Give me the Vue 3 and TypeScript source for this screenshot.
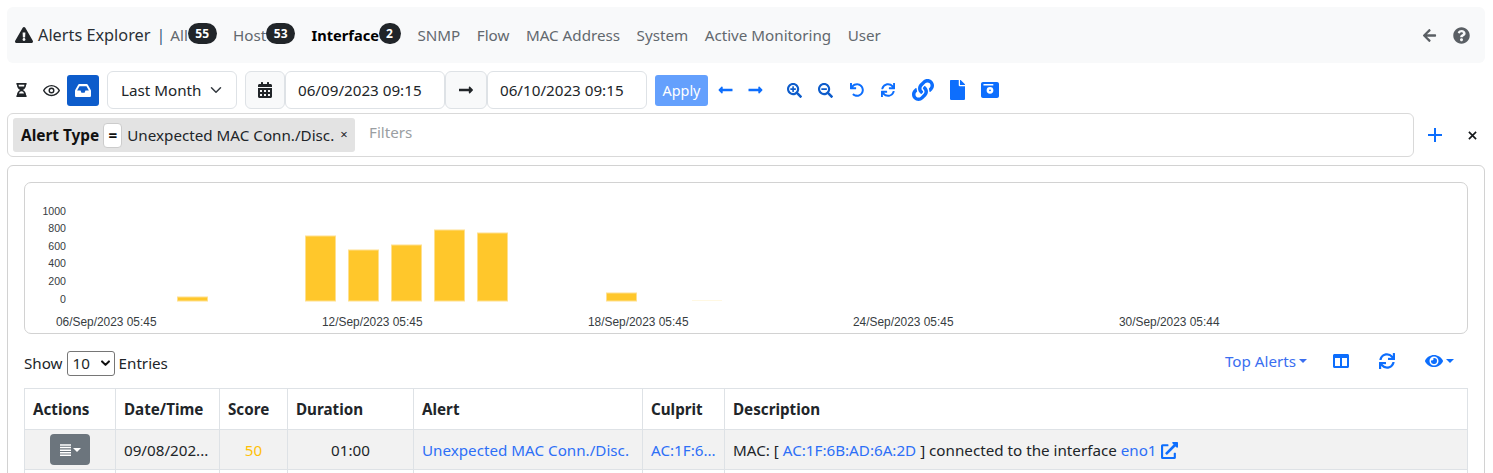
<script setup lang="ts">
const p = {
  warn: 'M569.517 440.013C587.975 472.007 564.806 512 527.94 512H48.054c-36.937 0-59.999-40.055-41.577-71.987L246.423 24.035c18.467-32.009 64.72-31.951 83.154 0l239.94 416.178zM288 354c-25.405 0-46 20.595-46 46s20.595 46 46 46 46-20.595 46-46-20.595-46-46-46zm-43.673-165.346l7.418 136c.347 6.364 5.609 11.346 11.982 11.346h48.546c6.373 0 11.635-4.982 11.982-11.346l7.418-136c.375-6.874-5.098-12.654-11.982-12.654h-63.383c-6.884 0-12.356 5.78-11.981 12.654z',
  hourglass: 'M360 0H24C10.745 0 0 10.745 0 24v16c0 13.255 10.745 24 24 24 0 90.965 51.016 167.734 120.842 192C75.016 280.266 24 357.035 24 448c-13.255 0-24 10.745-24 24v16c0 13.255 10.745 24 24 24h336c13.255 0 24-10.745 24-24v-16c0-13.255-10.745-24-24-24 0-90.965-51.016-167.734-120.842-192C308.984 231.734 360 154.965 360 64c13.255 0 24-10.745 24-24V24c0-13.255-10.745-24-24-24zm-75.078 384H99.08c17.059-46.797 52.096-80 92.92-80 40.821 0 75.862 33.196 92.922 80zm.019-256H99.078C91.988 108.548 88 86.748 88 64h208c0 22.805-3.987 44.587-11.059 64z',
  eyeR: 'M572.52 241.4C518.29 135.59 410.93 64 288 64S57.68 135.64 3.48 241.41a32.35 32.35 0 0 0 0 29.19C57.71 376.41 165.07 448 288 448s230.32-71.64 284.52-177.41a32.35 32.35 0 0 0 0-29.19zM288 400c-98.65 0-189.09-55-237.93-144C98.91 167 189.34 112 288 112s189.09 55 237.93 144C477.1 345 386.66 400 288 400z',
  inbox: 'M567.938 243.908L462.25 85.374A48.003 48.003 0 0 0 422.311 64H153.689a48 48 0 0 0-39.938 21.374L8.062 243.908A47.994 47.994 0 0 0 0 270.533V400c0 26.51 21.49 48 48 48h480c26.51 0 48-21.49 48-48V270.533a47.994 47.994 0 0 0-8.062-26.625zM162.252 128h251.497l85.333 128H376l-32 64H232l-32-64H76.918l85.334-128z',
  cal: 'M0 464c0 26.5 21.5 48 48 48h352c26.5 0 48-21.5 48-48V192H0v272zm320-196c0-6.6 5.4-12 12-12h40c6.6 0 12 5.4 12 12v40c0 6.6-5.4 12-12 12h-40c-6.6 0-12-5.4-12-12v-40zm0 128c0-6.6 5.4-12 12-12h40c6.6 0 12 5.4 12 12v40c0 6.6-5.4 12-12 12h-40c-6.6 0-12-5.4-12-12v-40zM192 268c0-6.6 5.4-12 12-12h40c6.6 0 12 5.4 12 12v40c0 6.6-5.4 12-12 12h-40c-6.6 0-12-5.4-12-12v-40zm0 128c0-6.6 5.4-12 12-12h40c6.6 0 12 5.4 12 12v40c0 6.6-5.4 12-12 12h-40c-6.6 0-12-5.4-12-12v-40zM64 268c0-6.6 5.4-12 12-12h40c6.6 0 12 5.4 12 12v40c0 6.6-5.4 12-12 12H76c-6.6 0-12-5.4-12-12v-40zm0 128c0-6.6 5.4-12 12-12h40c6.6 0 12 5.4 12 12v40c0 6.6-5.4 12-12 12H76c-6.6 0-12-5.4-12-12v-40zM400 64h-48V16c0-8.8-7.2-16-16-16h-32c-8.8 0-16 7.2-16 16v48H160V16c0-8.8-7.2-16-16-16h-32c-8.8 0-16 7.2-16 16v48H48C21.5 64 0 85.5 0 112v48h448v-48c0-26.5-21.5-48-48-48z',
  right: 'M313.941 216H12c-6.627 0-12 5.373-12 12v56c0 6.627 5.373 12 12 12h301.941v46.059c0 21.382 25.851 32.09 40.971 16.971l86.059-86.059c9.373-9.373 9.373-24.569 0-33.941l-86.059-86.059c-15.119-15.119-40.971-4.411-40.971 16.971V216z',
  left: 'M134.059 296H436c6.627 0 12-5.373 12-12v-56c0-6.627-5.373-12-12-12H134.059v-46.059c0-21.382-25.851-32.09-40.971-16.971L7.029 239.029c-9.373 9.373-9.373 24.569 0 33.941l86.059 86.059c15.119 15.119 40.971 4.411 40.971-16.971V296z',
  zoomIn: 'M304 192v32c0 6.6-5.4 12-12 12h-56v56c0 6.6-5.4 12-12 12h-32c-6.6 0-12-5.4-12-12v-56h-56c-6.6 0-12-5.4-12-12v-32c0-6.6 5.4-12 12-12h56v-56c0-6.6 5.4-12 12-12h32c6.6 0 12 5.4 12 12v56h56c6.6 0 12 5.4 12 12zm201 284.7L476.7 505c-9.4 9.4-24.6 9.4-33.9 0L343 405.3c-4.5-4.5-7-10.6-7-17V372c-35.3 27.6-79.7 44-128 44C93.1 416 0 322.9 0 208S93.1 0 208 0s208 93.1 208 208c0 48.3-16.4 92.7-44 128h16.3c6.4 0 12.5 2.5 17 7l99.7 99.7c9.3 9.4 9.3 24.6 0 34zM344 208c0-75.2-60.8-136-136-136S72 132.8 72 208s60.8 136 136 136 136-60.8 136-136z',
  zoomOut: 'M304 192v32c0 6.6-5.4 12-12 12H124c-6.6 0-12-5.4-12-12v-32c0-6.6 5.4-12 12-12h168c6.6 0 12 5.4 12 12zm201 284.7L476.7 505c-9.4 9.4-24.6 9.4-33.9 0L343 405.3c-4.5-4.5-7-10.6-7-17V372c-35.3 27.6-79.7 44-128 44C93.1 416 0 322.9 0 208S93.1 0 208 0s208 93.1 208 208c0 48.3-16.4 92.7-44 128h16.3c6.4 0 12.5 2.5 17 7l99.7 99.7c9.3 9.4 9.3 24.6 0 34zM344 208c0-75.2-60.8-136-136-136S72 132.8 72 208s60.8 136 136 136 136-60.8 136-136z',
  undo: 'M212.333 224.333H12c-6.627 0-12-5.373-12-12V12C0 5.373 5.373 0 12 0h48c6.627 0 12 5.373 12 12v78.112C117.773 39.279 184.26 7.47 258.175 8.007c136.906.994 246.448 111.623 246.157 248.532C504.041 393.258 393.12 504 256.333 504c-64.089 0-122.496-24.313-166.51-64.215-5.099-4.622-5.334-12.554-.467-17.42l33.967-33.967c4.474-4.474 11.662-4.717 16.401-.525C170.76 415.336 211.58 432 256.333 432c97.268 0 176-78.716 176-176 0-97.267-78.716-176-176-176-58.496 0-110.28 28.476-142.274 72.333h98.274c6.627 0 12 5.373 12 12v48c0 6.627-5.373 12-12 12z',
  sync: 'M440.65 12.57l4 82.77A247.16 247.16 0 0 0 255.83 8C134.73 8 33.91 94.92 12.29 209.82A12 12 0 0 0 24.09 224h49.05a12 12 0 0 0 11.67-9.26 175.91 175.91 0 0 1 317-56.94l-101.46-4.86a12 12 0 0 0-12.57 12v47.41a12 12 0 0 0 12 12H500a12 12 0 0 0 12-12V12a12 12 0 0 0-12-12h-47.37a12 12 0 0 0-11.98 12.57zM255.83 432a175.61 175.61 0 0 1-146-77.8l101.8 4.87a12 12 0 0 0 12.57-12v-47.4a12 12 0 0 0-12-12H12a12 12 0 0 0-12 12V500a12 12 0 0 0 12 12h47.35a12 12 0 0 0 12-12.6l-4.15-82.57A247.17 247.17 0 0 0 255.83 504c121.11 0 221.93-86.92 243.55-201.82a12 12 0 0 0-11.8-14.18h-49.05a12 12 0 0 0-11.67 9.26A175.86 175.86 0 0 1 255.83 432z',
  link: 'M326.612 185.391c59.747 59.809 58.927 155.698.36 214.59-.11.12-.24.25-.36.37l-67.2 67.2c-59.27 59.27-155.699 59.262-214.96 0-59.27-59.26-59.27-155.7 0-214.96l37.106-37.106c9.84-9.84 26.786-3.3 27.294 10.606.648 17.722 3.826 35.527 9.69 52.721 1.986 5.822.567 12.262-3.783 16.612l-13.087 13.087c-28.026 28.026-28.905 73.66-1.155 101.96 28.024 28.579 74.086 28.749 102.325.51l67.2-67.19c28.191-28.191 28.073-73.757 0-101.83-3.701-3.694-7.429-6.564-10.341-8.569a16.037 16.037 0 0 1-6.947-12.606c-.396-10.567 3.348-21.456 11.698-29.806l21.054-21.055c5.521-5.521 14.182-6.199 20.584-1.731a152.482 152.482 0 0 1 20.522 17.197zM467.547 44.449c-59.261-59.262-155.69-59.27-214.96 0l-67.2 67.2c-.12.12-.25.25-.36.37-58.566 58.892-59.387 154.781.36 214.59a152.454 152.454 0 0 0 20.521 17.196c6.402 4.468 15.064 3.789 20.584-1.731l21.054-21.055c8.35-8.35 12.094-19.239 11.698-29.806a16.037 16.037 0 0 0-6.947-12.606c-2.912-2.005-6.64-4.875-10.341-8.569-28.073-28.073-28.191-73.639 0-101.83l67.2-67.19c28.239-28.239 74.3-28.069 102.325.51 27.75 28.3 26.872 73.934-1.155 101.96l-13.087 13.087c-4.35 4.35-5.769 10.79-3.783 16.612 5.864 17.194 9.042 34.999 9.69 52.721.509 13.906 17.454 20.446 27.294 10.606l37.106-37.106c59.271-59.259 59.271-155.699.001-214.959z',
  file: 'M224 136V0H24C10.7 0 0 10.7 0 24v464c0 13.3 10.7 24 24 24h336c13.3 0 24-10.7 24-24V160H248c-13.2 0-24-10.8-24-24zm160-14.1v6.1H256V0h6.1c6.4 0 12.5 2.5 17 7l97.9 98c4.5 4.5 7 10.6 7 16.9z',
  save: 'M56 0h400c30 0 56 26 56 56v343c0 30-26 56-56 56H56c-30 0-56-26-56-56V56C0 26 26 0 56 0zM70 56v40h280V56H70zM256 140a96 96 0 1 0 0 192 96 96 0 1 0 0-192zm0 70a26 26 0 1 1 0 52 26 26 0 1 1 0-52z',
  columns: 'M464 32H48C21.49 32 0 53.49 0 80v352c0 26.51 21.49 48 48 48h416c26.51 0 48-21.49 48-48V80c0-26.51-21.49-48-48-48zM224 416H64V160h160v256zm224 0H288V160h160v256z',
  eye: 'M572.52 241.4C518.29 135.59 410.93 64 288 64S57.68 135.64 3.48 241.41a32.35 32.35 0 0 0 0 29.19C57.71 376.41 165.07 448 288 448s230.32-71.64 284.52-177.41a32.35 32.35 0 0 0 0-29.19zM288 400a144 144 0 1 1 144-144 143.93 143.93 0 0 1-144 144zm0-240a95.31 95.31 0 0 0-25.31 3.79 47.85 47.85 0 0 1-66.9 66.9A95.78 95.78 0 1 0 288 160z',
  help: 'M504 256c0 136.997-111.043 248-248 248S8 392.997 8 256C8 119.083 119.043 8 256 8s248 111.083 248 248zM262.655 90c-54.497 0-89.255 22.957-116.549 63.758-3.536 5.286-2.353 12.415 2.715 16.258l34.699 26.31c5.205 3.947 12.621 3.008 16.665-2.122 17.864-22.658 30.113-35.797 57.303-35.797 20.429 0 45.698 13.148 45.698 32.958 0 14.976-12.363 22.667-32.534 33.976C247.128 238.528 216 254.941 216 296v4c0 6.627 5.373 12 12 12h56c6.627 0 12-5.373 12-12v-1.333c0-28.462 83.186-29.647 83.186-106.667 0-58.002-60.165-102-116.531-102zM256 338c-25.365 0-46 20.635-46 46 0 25.364 20.635 46 46 46s46-20.636 46-46c0-25.365-20.635-46-46-46z',
  back: 'M257.5 445.1l-22.2 22.2c-9.4 9.4-24.6 9.4-33.9 0L7 273c-9.4-9.4-9.4-24.6 0-33.9L201.4 44.7c9.4-9.4 24.6-9.4 33.9 0l22.2 22.2c9.5 9.5 9.3 25-.4 34.3L136.6 216H424c13.3 0 24 10.7 24 24v32c0 13.3-10.7 24-24 24H136.6l120.5 114.8c9.8 9.3 10 24.8.4 34.3z',
  ext: 'M432,320H400a16,16,0,0,0-16,16V448H64V128H208a16,16,0,0,0,16-16V80a16,16,0,0,0-16-16H48A48,48,0,0,0,0,112V464a48,48,0,0,0,48,48H400a48,48,0,0,0,48-48V336A16,16,0,0,0,432,320ZM488,0h-128c-21.37,0-32.05,25.91-17,41l35.73,35.73L135,320.37a24,24,0,0,0,0,34L157.67,377a24,24,0,0,0,34,0L435.28,133.32,471,169c15,15,41,4.5,41-17V24A24,24,0,0,0,488,0Z'
}

const navItems: { label: string; badge?: string; active?: boolean }[] = [
  { label: 'All', badge: '55' },
  { label: 'Host', badge: '53' },
  { label: 'Interface', badge: '2', active: true },
  { label: 'SNMP' },
  { label: 'Flow' },
  { label: 'MAC Address' },
  { label: 'System' },
  { label: 'Active Monitoring' },
  { label: 'User' }
]

const yTicks = [
  { t: '1000', y: 32 }, { t: '800', y: 49 }, { t: '600', y: 67 },
  { t: '400', y: 84 }, { t: '200', y: 102 }, { t: '0', y: 120 }
]
const xTicks = [
  { t: '06/Sep/2023 05:45', x: 31 }, { t: '12/Sep/2023 05:45', x: 297 },
  { t: '18/Sep/2023 05:45', x: 563 }, { t: '24/Sep/2023 05:45', x: 828 },
  { t: '30/Sep/2023 05:44', x: 1094 }
]
const baseY = 118
const bars = [
  { x: 152.5, top: 114 }, { x: 280.5, top: 53 }, { x: 323.5, top: 67 }, { x: 366.5, top: 62 },
  { x: 409.5, top: 47 }, { x: 452.5, top: 50 }, { x: 581.5, top: 110 }
]
const cols = [91, 104, 68, 126, 229, 82, 743]
</script>

<template>
  <div class="page">
    <nav class="navbar">
      <svg class="warn" viewBox="0 0 576 512"><path :d="p.warn" /></svg>
      <span class="title">Alerts Explorer</span>
      <span class="sep">|</span>
      <div class="links">
        <a v-for="n in navItems" :key="n.label" class="nl" :class="{ active: n.active }">
          {{ n.label }}<span v-if="n.badge" class="badge" :class="{ wide: n.badge.length > 1 }">{{ n.badge }}</span>
        </a>
      </div>
      <div class="nav-right">
        <svg class="back" viewBox="0 0 448 512"><path :d="p.back" /></svg>
        <svg class="help" viewBox="0 0 512 512"><path :d="p.help" /></svg>
      </div>
    </nav>

    <div class="toolbar">
      <div class="tb-ic plain"><svg class="hg" viewBox="0 0 384 512"><path :d="p.hourglass" /></svg></div>
      <div class="tb-ic plain eye-w">
        <svg class="eyeR" viewBox="0 0 576 512"><path :d="p.eyeR" /><circle cx="288" cy="256" r="78" fill="none" stroke="currentColor" stroke-width="48" /></svg>
      </div>
      <div class="inbox"><svg viewBox="0 64 576 384" preserveAspectRatio="none"><path :d="p.inbox" /></svg></div>
      <div class="select">Last Month
        <svg class="chev" viewBox="0 0 16 16"><path fill="none" stroke="#343a40" stroke-linecap="round" stroke-linejoin="round" stroke-width="2" d="m2 5 6 6 6-6" /></svg>
      </div>
      <div class="group">
        <div class="addon cal"><svg viewBox="0 0 448 512"><path :d="p.cal" /></svg></div>
        <div class="input">06/09/2023 09:15</div>
        <div class="addon arr"><svg viewBox="0 0 448 512"><path :d="p.right" /></svg></div>
        <div class="input">06/10/2023 09:15</div>
      </div>
      <button class="apply">Apply</button>
      <div class="actions">
        <svg class="a-left" viewBox="0 0 448 512"><path :d="p.left" /></svg>
        <svg class="a-right" viewBox="0 0 448 512"><path :d="p.right" /></svg>
        <svg class="a-zi" viewBox="0 0 512 512"><path :d="p.zoomIn" /></svg>
        <svg class="a-zo" viewBox="0 0 512 512"><path :d="p.zoomOut" /></svg>
        <svg class="a-un" viewBox="0 0 512 512"><path :d="p.undo" /></svg>
        <svg class="a-sy" viewBox="0 0 512 512"><path :d="p.sync" /></svg>
        <svg class="a-li" viewBox="0 0 512 512"><path :d="p.link" /></svg>
        <svg class="a-fi" viewBox="0 0 384 512"><path :d="p.file" /></svg>
        <svg class="a-sa" viewBox="0 0 512 455"><path fill-rule="evenodd" :d="p.save" /></svg>
      </div>
    </div>

    <div class="filter-row">
      <div class="filter-box">
        <div class="tag">
          <b class="tag-key">Alert Type</b>
          <span class="eq">=</span>
          <span class="tag-val">Unexpected MAC Conn./Disc.</span>
          <span class="tag-x">×</span>
        </div>
        <span class="placeholder">Filters</span>
      </div>
      <svg class="plus" viewBox="0 0 14 14"><path d="M7 0v14M0 7h14" stroke="#0d6efd" stroke-width="2" fill="none" /></svg>
      <svg class="close" viewBox="0 0 10 10"><path d="M1 1l8 8M9 1l-8 8" stroke="#15181b" stroke-width="1.8" fill="none" /></svg>
    </div>

    <div class="card">
      <div class="chart">
        <svg width="1442" height="150" viewBox="0 0 1442 150">
          <text v-for="t in yTicks" :key="t.t" class="ct" x="41" :y="t.y" text-anchor="end">{{ t.t }}</text>
          <text v-for="t in xTicks" :key="t.t" class="ct cx" :x="t.x" y="143">{{ t.t }}</text>
          <rect v-for="b in bars" :key="b.x" :x="b.x" :y="b.top" width="30" :height="baseY - b.top" fill="#ffc72b" stroke="#ffe08e" stroke-width="1" />
          <rect x="667" y="117" width="30" height="1" fill="#fff8e2" />
        </svg>
      </div>

      <div class="dt-head">
        <div class="show">Show
          <span class="sel10">10<svg viewBox="0 0 16 16"><path fill="none" stroke="#111" stroke-width="3" stroke-linecap="round" stroke-linejoin="round" d="m3 5 5 5 5-5" /></svg></span>
          Entries
        </div>
        <div class="dt-tools">
          <a class="top-alerts">Top Alerts<i class="caret"></i></a>
          <svg class="t-col" viewBox="0 0 512 512"><path :d="p.columns" /></svg>
          <svg class="t-sync" viewBox="0 0 512 512"><path :d="p.sync" /></svg>
          <span class="t-eye"><svg viewBox="0 0 576 512"><path :d="p.eye" /></svg><i class="caret"></i></span>
        </div>
      </div>

      <table class="table">
        <colgroup><col v-for="(c, i) in cols" :key="i" :style="{ width: c + 'px' }" /></colgroup>
        <thead>
          <tr>
            <th>Actions</th><th>Date/Time</th><th>Score</th><th>Duration</th><th>Alert</th><th>Culprit</th><th>Description</th>
          </tr>
        </thead>
        <tbody>
          <tr class="striped">
            <td class="c">
              <span class="act-btn">
                <svg width="11" height="12" viewBox="0 0 11 12"><path d="M0 1h11M0 3.6h11M0 6.2h11M0 8.8h11M0 11.2h11" stroke="#fff" stroke-width="1.5" /></svg><i class="caret w"></i>
              </span>
            </td>
            <td>09/08/202...</td>
            <td class="c score">50</td>
            <td class="c">01:00</td>
            <td><a>Unexpected MAC Conn./Disc.</a></td>
            <td><a>AC:1F:6...</a></td>
            <td>MAC: [ <a>AC:1F:6B:AD:6A:2D</a> ] connected to the interface <a>eno1</a> <svg class="ext" viewBox="0 0 512 512"><path :d="p.ext" /></svg></td>
          </tr>
          <tr class="empty"><td></td><td></td><td></td><td></td><td></td><td></td><td></td></tr>
        </tbody>
      </table>
    </div>
  </div>
</template>

<style>
html, body { margin: 0; background: #fff; overflow: hidden; }
</style>

<style scoped>
.page {
  box-sizing: border-box;
  width: 1493px;
  height: 473px;
  overflow: hidden;
  padding: 7px 8px 0 7px;
  font-family: "Noto Sans", "Open Sans", sans-serif;
  font-size: 15.2px;
  color: #212529;
}
svg { display: block; fill: currentColor; flex: none; }
a { color: #2d6ff7; }

.navbar {
  display: flex;
  align-items: center;
  height: 56px;
  background: #f8f9fa;
  border-radius: 6px;
  padding: 0 15px 0 8px;
}
.warn { width: 18px; height: 16px; color: #212529; }
.title { font-size: 16.3px; margin-left: 5px; color: #2a2f35; }
.sep { margin-left: 6px; font-size: 16px; color: #3a5d80; }
.links { display: flex; align-items: center; margin-left: 5px; gap: 16.5px; }
.nl { color: #62686e; display: flex; align-items: center; }
.nl.active { color: #000; font-weight: 700; font-size: 14.6px; }
.badge {
  background: #212529;
  color: #fff;
  font-size: 12px;
  font-weight: 700;
  line-height: 21px;
  height: 21px;
  min-width: 8px;
  padding: 0 7px;
  border-radius: 11px;
  margin-top: -3px;
}
.badge.wide { padding: 0 7.5px; }
.nav-right { margin-left: auto; display: flex; align-items: center; gap: 16px; }
.back { width: 15px; height: 15px; color: #5a5f64; }
.help { width: 17px; height: 17px; color: #5a5f64; }

.toolbar { display: flex; align-items: center; height: 38px; margin-top: 8px; }
.tb-ic { display: flex; align-items: center; justify-content: center; }
.plain { width: 29px; height: 31px; }
.eye-w { width: 31px; }
.hg { width: 11px; height: 14px; }
.eyeR { width: 17px; height: 15px; }
.inbox {
  width: 32px; height: 31px; background: #0d5ccb; color: #fff; border-radius: 3px;
  display: flex; align-items: center; justify-content: center;
}
.inbox svg { width: 16px; height: 13px; }
.select {
  box-sizing: border-box;
  width: 130px; height: 38px; margin-left: 8px; padding-left: 13px;
  border: 1px solid #dee2e6; border-radius: 6px;
  display: flex; align-items: center; justify-content: space-between; padding-right: 14px;
}
.chev { width: 12px; height: 12px; }
.group { display: flex; margin-left: 8px; }
.addon {
  box-sizing: border-box; height: 38px; border: 1px solid #dee2e6; border-radius: 6px; background: #f8f9fa;
  display: flex; align-items: center; justify-content: center;
}
.cal { width: 40px; }
.cal svg { width: 14px; height: 16px; }
.arr { width: 42px; }
.arr svg { width: 16px; height: 16px; }
.input {
  box-sizing: border-box; width: 160px; height: 38px; border: 1px solid #dee2e6; border-radius: 6px;
  display: flex; align-items: center; padding-left: 12px;
}
.apply {
  margin-left: 8px; width: 53px; height: 31px; border: 0; border-radius: 3px;
  background: #64a0fd; color: #fff; font: inherit; font-size: 14.4px; padding: 0;
}
.actions { display: flex; align-items: center; color: #0d6efd; }
.a-left { width: 15px; height: 16px; margin-left: 10px; }
.a-right { width: 15px; height: 16px; margin-left: 15px; }
.a-zi { width: 15px; height: 15px; margin-left: 24px; color: #0d5ccb; }
.a-zo { width: 15px; height: 15px; margin-left: 16px; color: #0d5ccb; }
.a-un { width: 14px; height: 14px; margin-left: 17px; }
.a-sy { width: 14px; height: 14px; margin-left: 17px; }
.a-li { width: 22px; height: 22px; margin-left: 17px; }
.a-fi { width: 15px; height: 20px; margin-left: 16px; }
.a-sa { width: 18px; height: 16px; margin-left: 16px; }

.filter-row { display: flex; align-items: center; margin-top: 4px; }
.filter-box {
  box-sizing: border-box; width: 1407px; height: 44px;
  border: 1px solid #d9d9d9; border-radius: 6px;
  display: flex; align-items: center; padding-left: 5px;
}
.tag {
  width: 342px; height: 34px; box-sizing: border-box; background: #e3e3e3; border-radius: 3px;
  display: flex; align-items: center; padding-left: 8px;
}
.tag-key { font-weight: 700; color: #111; font-size: 15.4px; }
.eq {
  box-sizing: border-box; width: 19px; height: 25px; margin-left: 4px; background: #fff; border: 1px solid #ccc;
  border-radius: 4px; font-weight: 700; display: flex; align-items: center; justify-content: center; color: #111;
}
.tag-val { margin-left: 5px; color: #212529; }
.tag-x { margin-left: 6px; font-size: 13px; margin-top: -2px; }
.placeholder { margin-left: 14px; color: #9a9ea2; margin-top: -7px; }
.plus { width: 14px; height: 14px; margin-left: 14px; }
.close { width: 9px; height: 9px; margin-left: 26px; }

.card {
  box-sizing: border-box; margin-top: 8px; width: 1478px; height: 320px;
  border: 1px solid #d2d2d2; border-radius: 6px; padding: 16px 16px 0;
}
.chart { box-sizing: border-box; height: 152px; border: 1px solid #d2d2d2; border-radius: 7px; }
.ct { font-family: "Liberation Sans", Arial, sans-serif; font-size: 10.6px; fill: #373d3f; }
.cx { font-size: 11.9px; }

.dt-head { display: flex; justify-content: space-between; align-items: center; height: 54px; padding-top: 4px; box-sizing: border-box; }
.show { display: flex; align-items: center; gap: 4px; }
.sel10 {
  box-sizing: border-box; width: 48px; height: 25px; border: 1px solid #767676; border-radius: 3px;
  display: flex; align-items: center; justify-content: space-between; padding: 0 3px 0 5px;
}
.sel10 svg { width: 11px; height: 11px; }
.dt-tools { display: flex; align-items: center; color: #0d6efd; padding-right: 14px; margin-top: -4px; }
.top-alerts { display: flex; align-items: center; color: #3a6ef0; }
.caret {
  display: inline-block; width: 0; height: 0; margin-left: 3px;
  border-left: 4px solid transparent; border-right: 4px solid transparent; border-top: 4px solid currentColor;
}
.t-col { width: 16px; height: 16px; margin-left: 26px; }
.t-sync { width: 16px; height: 16px; margin-left: 30px; }
.t-eye { display: flex; align-items: center; margin-left: 30px; }
.t-eye svg { width: 18px; height: 16px; }

.table { width: 1443px; border-collapse: collapse; table-layout: fixed; }
.table th, .table td { border: 1px solid #dee2e6; padding: 0 8px; white-space: nowrap; overflow: hidden; }
.table th { height: 40px; text-align: left; font-weight: 700; color: #212529; }
.table td { height: 39px; }
.striped td { background: #f2f2f2; }
.c { text-align: center; }
.score { color: #ffc107; }
.act-btn {
  display: inline-flex; align-items: center; justify-content: center; width: 40px; height: 31px;
  background: #6c757d; border-radius: 4px; color: #fff; vertical-align: middle;
}
.caret.w { margin-left: 2px; }
.ext { display: inline-block; width: 17px; height: 17px; color: #0d6efd; vertical-align: -3px; margin-left: 1px; }
</style>
